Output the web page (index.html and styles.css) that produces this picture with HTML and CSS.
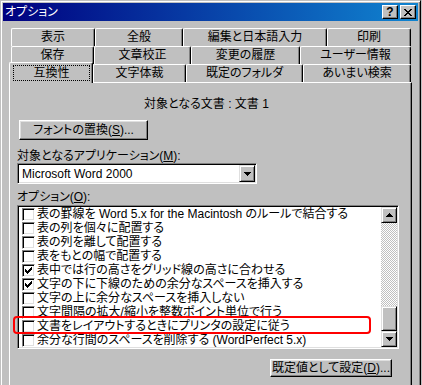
FILE: index.html
```html
<!DOCTYPE html>
<html lang="ja">
<head>
<meta charset="utf-8">
<title>オプション</title>
<link rel="stylesheet" href="styles.css">
</head>
<body>
<div class="dialog">
  <div class="titlebar">
    <span class="title">オプション</span>
    <div class="title-btns">
      <span class="tbtn help">?</span>
      <span class="tbtn close"><svg width="8" height="7" viewBox="0 0 8 7" shape-rendering="crispEdges"><path d="M0 0h2v1h-2zM6 0h2v1h-2zM1 1h2v1h-2zM5 1h2v1h-2zM2 2h4v1h-4zM3 3h2v1h-2zM2 4h4v1h-4zM1 5h2v1h-2zM5 5h2v1h-2zM0 6h2v1h-2zM6 6h2v1h-2z"/></svg></span>
    </div>
  </div>

  <div class="tabs">
    <div class="tabrow r1">
      <div class="tab">表示</div>
      <div class="tab">全般</div>
      <div class="tab">編集と日本語入力</div>
      <div class="tab">印刷</div>
    </div>
    <div class="tabrow r2">
      <div class="tab">保存</div>
      <div class="tab">文章校正</div>
      <div class="tab">変更の履歴</div>
      <div class="tab">ユーザー情報</div>
    </div>
    <div class="tabrow r3">
      <div class="tab sel"><span class="focus">互換性</span></div>
      <div class="tab">文字体裁</div>
      <div class="tab">既定のフォルダ</div>
      <div class="tab">あいまい検索</div>
    </div>
  </div>

  <div class="panel">
    <div class="doc">対象となる文書 : 文書 1</div>
    <div class="btn btn-font">フォントの置換(<u>S</u>)...</div>
    <div class="label label-app">対象となるアプリケーション(<u>M</u>):</div>
    <div class="combo">
      <span class="combo-text">Microsoft Word 2000</span>
      <span class="ddbtn"><svg width="7" height="4" viewBox="0 0 7 4" shape-rendering="crispEdges"><path d="M0 0h7v1H0zM1 1h5v1H1zM2 2h3v1H2zM3 3h1v1H3z"/></svg></span>
    </div>
    <div class="label label-opt">オプション(<u>O</u>):</div>
    <div class="list">
      <div class="list-items">
        <div class="item"><span class="cb"></span><span>表の罫線を Word 5.x for the Macintosh のルールで結合する</span></div>
        <div class="item"><span class="cb"></span><span>表の列を個々に配置する</span></div>
        <div class="item"><span class="cb"></span><span>表の列を離して配置する</span></div>
        <div class="item"><span class="cb"></span><span>表をもとの幅で配置する</span></div>
        <div class="item"><span class="cb"><svg width="7" height="7" viewBox="0 0 7 7" shape-rendering="crispEdges"><path d="M6 0h1v1h-1zM5 1h2v1h-2zM0 2h1v1h-1zM4 2h3v1h-3zM0 3h2v1h-2zM3 3h3v1h-3zM0 4h5v1h-5zM1 5h3v1h-3zM2 6h1v1h-1z"/></svg></span><span>表中では行の高さをグリッド線の高さに合わせる</span></div>
        <div class="item"><span class="cb"><svg width="7" height="7" viewBox="0 0 7 7" shape-rendering="crispEdges"><path d="M6 0h1v1h-1zM5 1h2v1h-2zM0 2h1v1h-1zM4 2h3v1h-3zM0 3h2v1h-2zM3 3h3v1h-3zM0 4h5v1h-5zM1 5h3v1h-3zM2 6h1v1h-1z"/></svg></span><span>文字の下に下線のための余分なスペースを挿入する</span></div>
        <div class="item"><span class="cb"></span><span>文字の上に余分なスペースを挿入しない</span></div>
        <div class="item"><span class="cb"></span><span>文字間隔の拡大/縮小を整数ポイント単位で行う</span></div>
        <div class="item"><span class="cb"></span><span>文書をレイアウトするときにプリンタの設定に従う</span></div>
        <div class="item"><span class="cb"></span><span>余分な行間のスペースを削除する (WordPerfect 5.x)</span></div>
      </div>
      <div class="scrollbar">
        <span class="sb-btn"><svg width="7" height="4" viewBox="0 0 7 4" shape-rendering="crispEdges"><path d="M3 0h1v1H3zM2 1h3v1H2zM1 2h5v1H1zM0 3h7v1H0z"/></svg></span>
        <span class="sb-track"><span class="sb-thumb"></span></span>
        <span class="sb-btn"><svg width="7" height="4" viewBox="0 0 7 4" shape-rendering="crispEdges"><path d="M0 0h7v1H0zM1 1h5v1H1zM2 2h3v1H2zM3 3h1v1H3z"/></svg></span>
      </div>
      <div class="highlight"></div>
    </div>
    <div class="footer">
      <div class="btn btn-default">既定値として設定(<u>D</u>)...</div>
    </div>
  </div>
</div>
</body>
</html>
```

FILE: styles.css
```css
* {
  box-sizing: border-box;
}

html,
body {
  margin: 0;
  padding: 0;
}

body {
  width: 422px;
  height: 385px;
  overflow: hidden;
  background: #c0c0c0;
  color: #000;
  font: 12px/14px "Liberation Sans", "Noto Sans CJK JP", sans-serif;
  font-feature-settings: "palt";
}

u {
  text-decoration: underline;
  text-underline-offset: 1px;
}

/* window frame */
.dialog {
  width: 421px;
  height: 400px;
  background: #c0c0c0;
  border: 1px solid;
  border-color: #c0c0c0 #000 #000 #c0c0c0;
  box-shadow: inset 1px 1px #fff, inset -1px -1px #808080;
  padding: 2px;
}

.titlebar {
  height: 18px;
  display: flex;
  align-items: center;
  justify-content: space-between;
  padding: 0 2px;
  background: linear-gradient(to right, #000080, #1084d0);
  color: #fff;
}

.title {
  line-height: 16px;
}

.title-btns {
  display: flex;
  gap: 2px;
}

.tbtn {
  width: 16px;
  height: 14px;
  display: flex;
  align-items: center;
  justify-content: center;
  background: #c0c0c0;
  color: #000;
  border: 1px solid;
  border-color: #fff #000 #000 #fff;
  box-shadow: inset -1px -1px #808080;
}

.help {
  font: bold 12px/12px "Liberation Sans", sans-serif;
}

/* tabs */
.tabs {
  margin-top: 7px;
}

.tabrow {
  display: grid;
  height: 18px;
  width: 400px;
  margin-left: 8px;
}

.r1 {
  grid-template-columns: 84px 88px 144px 84px;
}

.r2 {
  grid-template-columns: 83px 97px 109px 111px;
}

.r3 {
  grid-template-columns: 82px 93px 117px 108px;
}

.tab {
  background: #c0c0c0;
  border-top: 1px solid #fff;
  border-left: 1px solid #fff;
  border-right: 1px solid #000;
  border-radius: 2px 2px 0 0;
  box-shadow: inset -1px 0 #808080;
  text-align: center;
  line-height: 17px;
  white-space: nowrap;
}

.tab.sel {
  position: relative;
  z-index: 1;
  margin: -2px 0 -1px -2px;
  display: flex;
  padding: 2px 2px 2px 3px;
}

.focus {
  flex: 1;
  display: flex;
  align-items: center;
  justify-content: center;
  border: 1px dotted #000;
  line-height: 14px;
}

/* tab page */
.panel {
  position: relative;
  height: 320px;
  margin: 0 6px;
  padding: 14px 9px 0 7px;
  border-top: 1px solid #fff;
  border-left: 1px solid #fff;
  border-right: 1px solid #000;
  box-shadow: inset -1px 0 #808080;
}

.doc {
  height: 14px;
  text-align: center;
  padding-right: 6px;
}

.btn {
  display: flex;
  align-items: center;
  justify-content: center;
  background: #c0c0c0;
  border: 1px solid;
  border-color: #fff #000 #000 #fff;
  box-shadow: inset -1px -1px #808080, inset 1px 1px #dfdfdf;
  white-space: nowrap;
}

.btn-font {
  width: 129px;
  height: 20px;
  margin: 9px 0 0 2px;
}

.label {
  height: 14px;
}

.label-app {
  margin-top: 9px;
}

.label-opt {
  margin-top: 6px;
}

.combo {
  width: 240px;
  height: 21px;
  display: flex;
  align-items: center;
  padding: 1px;
  background: #fff;
  border: 1px solid;
  border-color: #808080 #fff #fff #808080;
  box-shadow: inset 1px 1px #000, inset -1px -1px #dfdfdf;
}

.combo-text {
  flex: 1;
  padding-left: 3px;
}

.ddbtn,
.sb-btn {
  width: 16px;
  height: 17px;
  display: flex;
  align-items: center;
  justify-content: center;
  background: #c0c0c0;
  border: 1px solid;
  border-color: #dfdfdf #000 #000 #dfdfdf;
  box-shadow: inset 1px 1px #fff, inset -1px -1px #808080;
}

.ddbtn svg,
.sb-btn svg {
  display: block;
}

/* list box */
.list {
  position: relative;
  width: 382px;
  height: 144px;
  margin-top: 1px;
  display: flex;
  padding: 1px;
  background: #fff;
  border: 1px solid;
  border-color: #808080 #fff #fff #808080;
  box-shadow: inset 1px 1px #000, inset -1px -1px #dfdfdf;
}

.list-items {
  flex: 1;
  overflow: hidden;
  background: #fff;
}

.item {
  height: 14px;
  display: flex;
  align-items: center;
  padding-left: 3px;
  white-space: nowrap;
}

.cb {
  flex: none;
  width: 13px;
  height: 13px;
  margin-right: 2px;
  display: flex;
  align-items: center;
  justify-content: center;
  background: #fff;
  border: 1px solid;
  border-color: #808080 #fff #fff #808080;
  box-shadow: inset 1px 1px #000, inset -1px -1px #dfdfdf;
}

.cb svg {
  display: block;
}

.scrollbar {
  flex: none;
  width: 16px;
  display: flex;
  flex-direction: column;
}

.sb-btn {
  height: 16px;
  flex: none;
}

.sb-track {
  flex: 1;
  display: flex;
  flex-direction: column;
  justify-content: flex-end;
  background-color: #c0c0c0;
  background-image: conic-gradient(#fff 25%, #c0c0c0 0 50%, #fff 0 75%, #c0c0c0 0);
  background-size: 2px 2px;
}

.sb-thumb {
  height: 25px;
  background: #c0c0c0;
  border: 1px solid;
  border-color: #dfdfdf #000 #000 #dfdfdf;
  box-shadow: inset 1px 1px #fff, inset -1px -1px #808080;
}

.highlight {
  position: absolute;
  left: -5px;
  top: 110px;
  width: 358px;
  height: 18px;
  border: 2px solid #f00;
  border-radius: 4px;
}

.footer {
  display: flex;
  justify-content: flex-end;
  margin-top: 10px;
  padding-right: 10px;
}

.btn-default {
  width: 122px;
  height: 18px;
}
```
